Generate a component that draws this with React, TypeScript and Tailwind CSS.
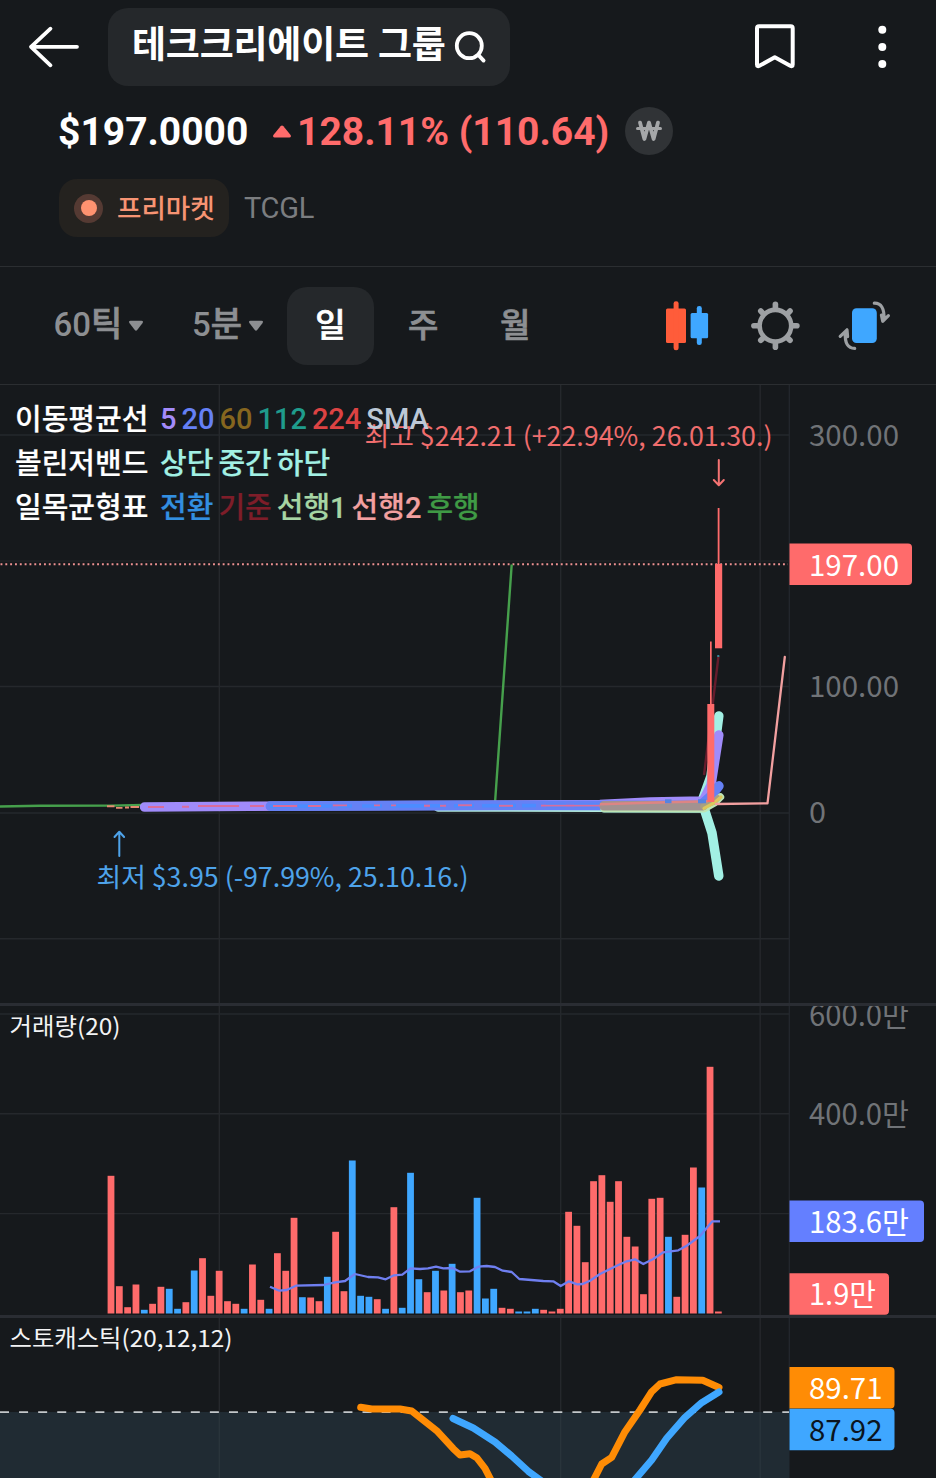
import React from "react";

const KR = '"Noto Sans CJK KR", "Noto Sans", sans-serif';
const RED = "#ff6b6b";
const BLUE = "#3fa7ff";
const GRID = "#25282c";

// Volume in chart pixels, one entry per trading day; true = rising day.
const volumes: [number, boolean][] = [
  [137.7, true], [27.3, true], [6.3, true], [29, true], [3.7, false], [9.7, true], [26.7, true], [24.7, false],
  [4.7, false], [11.3, true], [43, false], [55.3, true], [17.7, true], [42.7, true], [12.3, true], [9.7, true],
  [4.7, false], [49, true], [13.7, true], [4.7, false], [60.3, true], [42.7, true], [95.7, true], [16.3, false],
  [16, true], [12.3, true], [36.7, false], [81.7, true], [22.3, true], [153, false], [17.7, false], [16.7, false],
  [14.3, true], [4.7, false], [106.3, true], [5.7, false], [140.7, false], [34.3, false], [21.3, true], [42.7, false],
  [23, true], [49.7, false], [21.3, true], [23, true], [115.7, false], [15, false], [24.7, false], [5.7, true],
  [4.7, true], [2, false], [2, false], [4.7, false], [3.7, true], [2, true], [4.7, true], [101.7, true],
  [87.7, true], [51.3, true], [132.3, true], [138.3, true], [111.7, true], [132.3, true], [76.7, true], [67, true],
  [19.3, true], [114.7, true], [115.7, true], [76.7, false], [16.7, true], [78.7, true], [146, true], [126, false],
  [246.7, true], [2, true],
];

function VerticalGrid({ y1, y2 }: { y1: number; y2: number }) {
  return (
    <g stroke={GRID} strokeWidth="1.4">
      {[219.3, 560.7, 760.2].map((x) => (
        <line key={x} x1={x} x2={x} y1={y1} y2={y2} />
      ))}
      <line x1="789.3" x2="789.3" y1={y1} y2={y2} stroke="#22262c" />
    </g>
  );
}

function AxisLabel({ y, w, children }: { y: number; w: number; children: string }) {
  return (
    <text x="809" y={y} textLength={w} lengthAdjust="spacingAndGlyphs" fontSize="29.5" fontFamily={KR} fill="#707377">
      {children}
    </text>
  );
}

function Tag({ y, w, h = 41.5, tw, fill, color = "#fff", children }: {
  y: number; w: number; h?: number; tw: number; fill: string; color?: string; children: string;
}) {
  return (
    <g>
      <path d={`M789.5 ${y}h${w - 4}q4 0 4 4v${h - 8}q0 4 -4 4h-${w - 4}z`} fill={fill} />
      <text x="809" y={y + 32} textLength={tw} lengthAdjust="spacingAndGlyphs" fontSize="29.5" fontFamily={KR} fill={color}>
        {children}
      </text>
    </g>
  );
}

function Header() {
  return (
    <header className="flex h-[86px] items-start pt-2">
      <button className="ml-[28px] mt-[18px] h-[42px] w-[52px]">
        <svg viewBox="28 26 52 42" className="h-[42px] w-[52px]" fill="none" stroke="#fff" strokeWidth="3.8" strokeLinecap="round" strokeLinejoin="round">
          <path d="M77 46.8H31M50.5 28.7L31 46.8L50.5 65.3" />
        </svg>
      </button>
      <div className="ml-[27.5px] flex h-[78px] w-[402px] rounded-[20px] bg-[#25282b] pl-[24.5px]">
        <span className="mt-[11px] w-[313px] whitespace-nowrap text-[37px] leading-[54px] font-bold tracking-[-0.2px] text-white">테크크리에이트 그룹</span>
        <svg viewBox="453 29 36 36" className="ml-[8px] mt-[21px] h-[36px] w-[36px] shrink-0" fill="none" stroke="#fff" strokeWidth="3.8" strokeLinecap="round">
          <circle cx="469.3" cy="45.7" r="12.5" />
          <path d="M478.4 55L483.6 60.6" />
        </svg>
      </div>
      <svg viewBox="753 22 44 48" className="ml-[243.5px] mt-[14px] h-[48px] w-[44px]" fill="none" stroke="#fff" strokeWidth="4" strokeLinejoin="round">
        <path d="M759 26.3H790.7Q792.7 26.3 792.7 28.3V64.5Q792.7 67 790.2 65.8L774.8 57.3L759.4 65.8Q757 67 757 64.5V28.3Q757 26.3 759 26.3Z" />
      </svg>
      <svg viewBox="876 24 12 46" className="ml-[79px] mt-[16px] h-[46px] w-[12px]" fill="#fff">
        <circle cx="882.3" cy="29.7" r="4" />
        <circle cx="882.3" cy="47" r="4" />
        <circle cx="882.3" cy="64" r="4" />
      </svg>
    </header>
  );
}

function Quote() {
  return (
    <section className="h-[180px] pl-[58px] pt-[21px]">
      <div className="flex h-[48px] items-center">
        <span className="w-[214px] pt-px text-[39px] leading-[48px] font-bold text-white">$197.0000</span>
        <svg viewBox="0 0 20 13" className="h-[13px] w-[20px]" fill={RED}>
          <path d="M8.6 1.2Q10 0 11.4 1.2L18.6 10Q19.6 12.4 17.4 12.5H2.6Q.4 12.4 1.4 10Z" />
        </svg>
        <span className="ml-[5px] w-[313px] whitespace-nowrap pt-px text-[39px] leading-[48px] font-bold text-[#ff6b6b]">128.11% (110.64)</span>
        <span className="ml-[15px] flex size-[48px] items-center justify-center rounded-full bg-[#303336]">
          <svg viewBox="0 0 28 22" className="h-[22px] w-[28px]" fill="none" stroke="#a5a7a9" strokeWidth="3.8" strokeLinecap="round" strokeLinejoin="round">
            <path d="M5 2.6L9.4 19L14 2.6L18.6 19L23 2.6" />
            <path d="M2.5 8.4H25.5" strokeWidth="3" />
          </svg>
        </span>
      </div>
      <div className="mt-[24px] flex h-[58px] items-center">
        <div className="ml-px flex h-[58px] w-[170px] items-center rounded-[18px] bg-[#24221f] pl-[15px]">
          <span className="flex size-[29px] items-center justify-center rounded-full bg-[#553a33]">
            <span className="size-[16px] rounded-full bg-[#ff9270]" />
          </span>
          <span className="ml-[14px] whitespace-nowrap pt-[2px] text-[26.5px] leading-[40px] font-medium text-[#f79473]">프리마켓</span>
        </div>
        <span className="ml-[15px] text-[29px] leading-[40px] tracking-[-0.3px] text-[#7b7d80]">TCGL</span>
      </div>
    </section>
  );
}

function Caret() {
  return (
    <svg viewBox="0 0 16 12" className="ml-[6px] h-[12px] w-[16px]" fill="#8d8f92">
      <path d="M2.5 .8H13.5Q15.8 1 14.6 3L9.2 10Q8 11.4 6.8 10L1.4 3Q.2 1 2.5 .8Z" />
    </svg>
  );
}

function Toolbar() {
  return (
    <nav className="flex h-[118px] items-center border-t border-[#2b2e31] text-[33px] leading-[48px] font-medium text-[#8d8f92]">
      <div className="ml-[53.5px] flex w-[91px] items-center whitespace-nowrap">
        <span className="-mt-[2px] w-[68.5px]">60<span className="[-webkit-text-stroke:0.7px_currentColor] text-[34px]">틱</span></span>
        <Caret />
      </div>
      <div className="ml-[47.5px] flex w-[72px] items-center whitespace-nowrap">
        <span className="-mt-[2px] w-[49.5px]">5<span className="[-webkit-text-stroke:0.7px_currentColor] text-[34px]">분</span></span>
        <Caret />
      </div>
      <div className="ml-[23px] flex h-[78px] w-[87px] items-center justify-center rounded-[20px] bg-[#25282b] text-white [-webkit-text-stroke:0.7px_currentColor]">일</div>
      <div className="ml-[34px] w-[31px] [-webkit-text-stroke:0.7px_currentColor]">주</div>
      <div className="ml-[61px] w-[31px] [-webkit-text-stroke:0.7px_currentColor]">월</div>
      <svg viewBox="660 298 236 56" className="ml-[128.5px] h-[56px] w-[236px] shrink-0">
        <g fill="#ff5c3a">
          <rect x="666" y="308.4" width="20" height="34.6" rx="1.5" />
          <rect x="673.6" y="301.3" width="5" height="49" rx="2.3" />
        </g>
        <g fill={BLUE}>
          <rect x="690.6" y="313" width="17.5" height="25.3" rx="1.5" />
          <rect x="696.8" y="306" width="5" height="39" rx="2.3" />
        </g>
        <g stroke="#9da0a3" fill="none" strokeLinecap="round" strokeLinejoin="round">
          <circle cx="775.4" cy="325.7" r="15.8" strokeWidth="4.6" />
          {[0, 45, 90, 135, 180, 225, 270, 315].map((a) => (
            <path key={a} d={a % 90 ? "M775.4 308V305" : "M775.4 308V304.2"} strokeWidth="5.6" transform={`rotate(${a} 775.4 325.7)`} />
          ))}
          <path d="M874.3 303.2C881 303 884.5 308 884 319.8M881.4 315L882.7 321.3L888.4 315.6" strokeWidth="3.2" />
          <path d="M854.7 348.4C848 348.4 844.6 343.5 845.3 332M840.2 336.4L847 329.8L847.6 336.6" strokeWidth="3.2" />
        </g>
        <rect x="852" y="308.3" width="24.8" height="34.7" rx="4.5" fill={BLUE} />
      </svg>
    </nav>
  );
}

const legend: { name: string; items: [string, string][] }[] = [
  { name: "이동평균선", items: [["5", "text-[#a38bfa]"], ["20", "text-[#6580f5]"], ["60", "text-[#86661f]"], ["112", "text-[#1f9c8c]"], ["224", "text-[#dc4343]"], ["SMA", "text-[#bcc8d6]"]] },
  { name: "볼린저밴드", items: [["상단", "text-[#a2f0e4]"], ["중간", "text-[#a2f0e4]"], ["하단", "text-[#a2f0e4]"]] },
  { name: "일목균형표", items: [["전환", "text-[#338fe0]"], ["기준", "text-[#7e1d29]"], ["선행1", "text-[#a6d5a4]"], ["선행2", "text-[#f2a0a0]"], ["후행", "text-[#3f9a45]"]] },
];

function PriceChart() {
  return (
    <section className="relative h-[619px] border-t border-[#2b2e31]">
      <svg viewBox="0 385 936 618" className="block h-[618px] w-[936px]" fill="none">
        <VerticalGrid y1={385} y2={1003} />
        <g stroke={GRID} strokeWidth="1.4">
          {[435, 561, 686.5, 813, 938.7].map((y) => <line key={y} x1="0" x2="789" y1={y} y2={y} strokeOpacity={y === 561 ? 0.6 : 1} />)}
        </g>
        <line x1="0.5" x2="788" y1="564.3" y2="564.3" stroke="#ef9292" strokeWidth="1.9" strokeDasharray="1.9 2.93" />

        <path d="M0 806.5L40 805.8L110 805.6L144 805L495 803L511.7 564.5" stroke="#46a04c" strokeWidth="2.4" strokeLinejoin="round" />
        <path d="M107 806.2H114.5M116 807.9H122.5M125 807.5H129M130.5 807H139" stroke="#e58a70" strokeWidth="1.9" />

        {/* Bollinger bands */}
        <path d="M438 806.8L604 807" stroke="#b4ecdf" strokeWidth="9.8" strokeLinecap="round" />
        <path d="M604 807.8L704 808L712 833L718.8 876" stroke="#a2f0e4" strokeWidth="9.5" strokeLinecap="round" strokeLinejoin="round" />
        <path d="M702 801L711 776L718.8 716" stroke="#a2f0e4" strokeWidth="9.5" strokeLinecap="round" strokeLinejoin="round" />
        <path d="M704 775L711 718L718.5 656" stroke="#641c2c" strokeWidth="2.4" />
        <path d="M718.3 655V657" stroke="#2f8a9a" strokeWidth="2" />

        {/* Moving averages */}
        <path d="M144.5 807L250 806.3L600 804.4L650 802L703 801L711 785L718.8 735" stroke="#a08bfa" strokeWidth="9.5" strokeLinecap="round" strokeLinejoin="round" />
        <path d="M270.5 806.2L437 805.5L560 805.4L700 805.6L710 797L718.8 786" stroke="#6581f5" strokeWidth="9.8" strokeLinecap="round" strokeLinejoin="round" />
        <path d="M270 806.2L600 805.4" stroke="#4c8cff" strokeWidth="3.6" strokeDasharray="20 8 34 6 14 10" />
        <path d="M604 808.6L704 808.8L715 802.5L720.5 797" stroke="#bde5b4" strokeWidth="7.4" strokeLinecap="round" strokeLinejoin="round" />
        <path d="M604 805.8L703 805.6" stroke="#a29290" strokeWidth="9.6" strokeLinecap="round" />
        <path d="M703 806.5L714 802L718 798" stroke="#a8a080" strokeWidth="5.5" strokeLinecap="round" strokeLinejoin="round" />
        <path d="M704 808.4L714 803L721 797" stroke="#dcc85c" strokeWidth="3.2" strokeLinecap="round" />
        <path
          d="M148 807H164M182 806.8H189M198 806H239M250 806H264M273 806H297M308 806H321M333 805.4H347M374 805.4H380M391 805.4H396M424 805.8H430M440 805.8H446M458 805.3H472M499 805.8H513M541 805.6H600"
          stroke="#d96c9c" strokeWidth="1.9" />
        <path d="M600 804.3L640 803L708 801.2" stroke="#dc8584" strokeWidth="2.4" />
        <path d="M665 801.2H671.5M698 801.2H706" stroke="#5584e0" strokeWidth="4" />
        <path d="M716 804L767.5 803.4L784.8 657" stroke="#f2a0a0" strokeWidth="2.3" strokeLinejoin="round" strokeLinecap="round" />

        {/* Candles */}
        <g fill={RED}>
          <rect x="710" y="641.5" width="1.7" height="64" />
          <rect x="707.3" y="704" width="7" height="98" />
          <rect x="717.7" y="508" width="1.8" height="57" />
          <rect x="715" y="564" width="7.2" height="84.3" />
        </g>
        <path d="M718.8 460V484.5M713.8 480L718.8 485.2L723.8 480" stroke="#f57373" strokeWidth="2" strokeLinecap="round" strokeLinejoin="round" />
        <path d="M119.3 856V832M114.5 837L119.3 831.8L124.1 837" stroke="#4ea3ea" strokeWidth="2" strokeLinecap="round" strokeLinejoin="round" />
        <text x="364.5" y="446" textLength="408" lengthAdjust="spacingAndGlyphs" fontSize="26.5" fontFamily={KR} fill="#f06d6d">최고 $242.21 (+22.94%, 26.01.30.)</text>
        <text x="96.5" y="887" textLength="372" lengthAdjust="spacingAndGlyphs" fontSize="26.5" fontFamily={KR} fill="#4ea3ea">최저 $3.95 (-97.99%, 25.10.16.)</text>

        <AxisLabel y={446} w={90}>300.00</AxisLabel>
        <AxisLabel y={697.4} w={90}>100.00</AxisLabel>
        <AxisLabel y={823.4} w={17}>0</AxisLabel>
        <Tag y={543.5} w={122.5} tw={90} fill={RED}>197.00</Tag>
      </svg>
      <div className="absolute top-[12px] left-[15px] flex flex-col text-[29px] leading-[44px] font-medium whitespace-nowrap">
        {legend.map((row, i) => (
          <div key={row.name} className="flex h-[44px]">
            <span className="w-[145px] pt-px text-white [-webkit-text-stroke:0.2px_currentColor]">{row.name}</span>
            <span className={i === 0 ? "flex gap-[5px]" : "flex gap-[5px] pt-px [-webkit-text-stroke:0.2px_currentColor]"}>
              {row.items.map(([label, color]) => <span key={label} className={color}>{label}</span>)}
            </span>
          </div>
        ))}
      </div>
    </section>
  );
}

function VolumeChart() {
  return (
    <section className="h-[312px] border-t-[3px] border-[#2a2d33]">
      <svg viewBox="0 1006 936 309" className="block h-[309px] w-[936px]" fill="none">
        <VerticalGrid y1={1006} y2={1315} />
        <g stroke={GRID} strokeWidth="1.4">
          {[1014, 1113.8, 1213.6].map((y) => <line key={y} x1="0" x2="789" y1={y} y2={y} />)}
        </g>
        {volumes.map(([h, up], i) => (
          <rect key={i} x={107.6 + i * 8.32} y={1313.5 - h} width="6.8" height={h} fill={up ? RED : BLUE} />
        ))}
        <polyline
          points="270,1286.7 279.3,1290.7 286.7,1290 296,1285.7 323.3,1285 335,1282.3 345,1281 355,1274 368,1277 378,1277.3 385.7,1279.3 394,1275.3 402.3,1274.7 410.5,1268.3 420,1269 428,1268.3 436,1266.7 443.3,1268.3 452.7,1268 460,1271.7 470,1271.3 478.3,1266.7 486.7,1266 495,1267 502.7,1270.7 511.7,1272 519.3,1279 543.3,1281 553.3,1281.3 560.7,1286 569,1281.3 577.3,1284.3 582.7,1284 590,1280.7 600,1274 616.7,1265.7 626.7,1261.3 635,1259.3 643.3,1264 653.3,1259 663.3,1252.3 678.3,1250.3 686.7,1245.7 700,1236 712.3,1221.3 720,1221.3"
          stroke="#6f7ff0" strokeWidth="2.3" strokeLinejoin="round" />
        <text x="9.5" y="1034.5" textLength="111" lengthAdjust="spacingAndGlyphs" fontSize="23.5" fontFamily={KR} fill="#f2f3f4">거래량(20)</text>
        <AxisLabel y={1025.6} w={100}>600.0만</AxisLabel>
        <AxisLabel y={1125} w={100}>400.0만</AxisLabel>
        <Tag y={1200.5} w={134.5} tw={100} fill="#647fff">183.6만</Tag>
        <Tag y={1273.3} w={99.5} tw={67} fill={RED}>1.9만</Tag>
      </svg>
    </section>
  );
}

function StochasticChart() {
  return (
    <section className="h-[163px] border-t-[3px] border-[#2a2d33]">
      <svg viewBox="0 1318 936 160" className="block h-[160px] w-[936px]" fill="none">
        <rect x="0" y="1412" width="789.5" height="66" fill="#202b33" />
        <VerticalGrid y1={1318} y2={1412} />
        <g stroke="#29343b" strokeWidth="1.4">
          {[219.3, 560.7, 760.2].map((x) => <line key={x} x1={x} x2={x} y1="1412" y2="1478" />)}
        </g>
        <line x1="0" x2="789" y1="1412.2" y2="1412.2" stroke="#c3c7ca" strokeWidth="1.8" strokeDasharray="9 10.08" />
        <g strokeWidth="7" strokeLinecap="round" strokeLinejoin="round">
          <path stroke="#ff8c05" d="M360.7 1407.3L371.7 1409L400 1409L411.7 1411L436.7 1430.7L453.3 1448.7L460 1455L470 1453.7L476.7 1457.7L485 1468.3L492 1482M592.5 1482L601.7 1464L611.7 1457.3L625 1431.7L640 1410L651.7 1391.7L660 1384L676.7 1379.7L702.7 1380.3L719 1387.5" />
          <path stroke={BLUE} d="M453 1418.5L473.3 1428L495 1442L511.7 1456L528.3 1471.3L543 1482M633 1482L651.7 1460L666.7 1438.3L685 1417.3L701.7 1402.7L719 1392" />
        </g>
        <text x="9.5" y="1346.5" textLength="223" lengthAdjust="spacingAndGlyphs" fontSize="23.5" fontFamily={KR} fill="#f2f3f4">스토캐스틱(20,12,12)</text>
        <Tag y={1367} w={105} tw={73.5} fill="#ff8c05">89.71</Tag>
        <Tag y={1408.7} w={105} tw={73.5} fill={BLUE} color="#0b1420">87.92</Tag>
      </svg>
    </section>
  );
}

export default function App() {
  return (
    <main className="h-[1478px] w-[936px] overflow-hidden bg-[#16191c] font-[Roboto,'Noto_Sans_CJK_KR',sans-serif]">
      <Header />
      <Quote />
      <Toolbar />
      <PriceChart />
      <VolumeChart />
      <StochasticChart />
    </main>
  );
}
